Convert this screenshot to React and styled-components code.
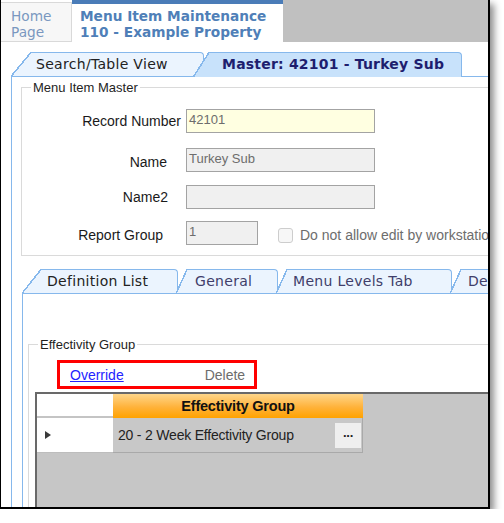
import React from 'react';
import styled, { createGlobalStyle } from 'styled-components';

const GlobalStyle = createGlobalStyle`
  html, body {
    margin: 0;
    padding: 0;
    background: #fff;
  }
  body {
    font-family: "Liberation Sans", Arial, sans-serif;
    overflow: hidden;
  }
`;

const Window = styled.div`
  box-sizing: border-box;
  width: 490px;
  height: 509px;
  display: flex;
  flex-direction: column;
  background: #fff;
  border-left: 1px solid #000;
  border-right: 2px solid #000;
  border-bottom: 2px solid #000;
  box-shadow: 4px 4px 7px rgba(0, 0, 0, 0.45);
  overflow: hidden;
`;

const Header = styled.div`
  display: flex;
  height: 42px;
  flex-shrink: 0;
  font-family: "DejaVu Sans", Verdana, sans-serif;
  font-size: 13.7px;
  line-height: 16px;
`;

const HomeTab = styled.div`
  box-sizing: border-box;
  width: 71px;
  margin-top: 2px;
  padding: 5px 0 0 10px;
  background: #f7f7f7;
  border: 1px solid #d9d9d9;
  border-left: none;
  color: #7a97c0;
`;

const PageTab = styled.div`
  box-sizing: border-box;
  width: 211px;
  padding: 4px 0 0 8px;
  border-top: 4px solid #4a7cb8;
  background: #fff;
  color: #4f7fb8;
  font-weight: bold;
  white-space: nowrap;
`;

const HeaderFill = styled.div`
  flex: 1;
  background: #c0c0c0;
`;

const TabRow = styled.div`
  display: flex;
  height: 24px;
  flex-shrink: 0;
  margin: ${(p) => p.$mt}px 0 0 ${(p) => p.$ml}px;
  position: relative;
  z-index: 2;
`;

const Tab = styled.div`
  position: relative;
  box-sizing: border-box;
  flex-shrink: 0;
  width: ${(p) => p.$w}px;
  height: ${(p) => (p.$active ? 25 : 24)}px;
  margin-left: ${(p) => p.$ml || 0}px;
  padding-left: ${(p) => p.$pl}px;
  font-family: "DejaVu Sans", Verdana, sans-serif;
  font-size: 14px;
  line-height: 25px;
  white-space: nowrap;
  color: ${(p) => (p.$active ? '#1e1e6e' : p.$dim ? '#403e6a' : '#222')};
  font-weight: ${(p) => (p.$active ? 'bold' : 'normal')};
  letter-spacing: ${(p) => (p.$active ? '0.2px' : '0.3px')};

  &::before {
    content: '';
    position: absolute;
    top: 0;
    bottom: 0;
    left: ${(p) => p.$slant}px;
    right: 0;
    background: ${(p) => (p.$active ? '#c8e2fb' : '#ebf4fe')};
    border: 1px solid #86b8ec;
    border-left: none;
    border-bottom: none;
    border-top-right-radius: 4px;
  }

  &::after {
    content: '';
    position: absolute;
    top: 0;
    bottom: 0;
    left: 0;
    width: ${(p) => p.$slant + 1}px;
    background: linear-gradient(
      to top left,
      ${(p) => (p.$active ? '#c8e2fb' : '#ebf4fe')} calc(50% - 1px),
      #86b8ec calc(50% - 1px),
      #86b8ec calc(50% + 0.5px),
      transparent calc(50% + 0.5px)
    );
  }

  span {
    position: relative;
    z-index: 1;
  }
`;

const Panel = styled.div`
  display: flex;
  flex-direction: column;
  flex: 1;
  min-height: 0;
  margin-left: ${(p) => p.$ml}px;
  padding: ${(p) => p.$pt}px 0 0 ${(p) => p.$pl}px;
  border-top: 1px solid #86b8ec;
  border-left: 1px solid #86b8ec;
  background: #fff;
`;

const GroupBox = styled.fieldset`
  box-sizing: border-box;
  display: flex;
  flex-direction: column;
  flex: ${(p) => (p.$grow ? 1 : 'none')};
  width: 560px;
  min-width: 0;
  margin: ${(p) => p.$mt || 0}px 0 0 ${(p) => p.$ml || 0}px;
  padding: 0 0 ${(p) => p.$pb || 0}px 0;
  border: 1px solid #dadada;
  ${(p) => (p.$grow ? 'border-bottom: none;' : '')}
`;

const Legend = styled.legend`
  margin-left: 9px;
  padding: 0 2px;
  font-size: 13px;
  line-height: 15px;
  color: #1e1e1e;
`;

const FormRow = styled.div`
  display: flex;
  align-items: center;
  height: 24px;
  margin-top: ${(p) => p.$mt}px;
`;

const Label = styled.div`
  box-sizing: border-box;
  width: 164px;
  padding-right: ${(p) => p.$pr}px;
  padding-top: ${(p) => p.$dy || 0}px;
  text-align: right;
  font-size: 14px;
  color: #1a1a1a;
  white-space: nowrap;
`;

const Field = styled.div`
  box-sizing: border-box;
  width: ${(p) => p.$w}px;
  height: 24px;
  padding: 2px 0 0 2px;
  background: ${(p) => (p.$highlight ? '#ffffe1' : '#f0f0f0')};
  border: 1px solid #a3a3a3;
  font-size: 13px;
  color: #6d6d6d;
`;

const Check = styled.div`
  display: flex;
  align-items: center;
  gap: 7px;
  margin-left: 20px;
  padding-top: 4px;
  font-size: 14px;
  color: #6d6d6d;
  white-space: nowrap;
`;

const Box = styled.span`
  box-sizing: border-box;
  width: 15px;
  height: 15px;
  border: 1px solid #cdcdcd;
  border-radius: 3px;
  background: #f7f7f7;
`;

const ActionBox = styled.div`
  box-sizing: border-box;
  display: flex;
  align-items: center;
  width: 200px;
  height: 29px;
  margin: 8px 0 0 28px;
  padding-left: 10px;
  border: 3px solid #ff0000;
  font-size: 14px;
`;

const LinkText = styled.a`
  color: ${(p) => (p.$disabled ? '#6d6d6d' : '#2323ff')};
  text-decoration: ${(p) => (p.$disabled ? 'none' : 'underline')};
  margin-left: ${(p) => p.$ml || 0}px;
  cursor: pointer;
`;

const Grid = styled.div`
  flex: 1;
  margin: 3px 0 0 6px;
  display: grid;
  grid-template-columns: 76px 250px;
  grid-template-rows: 24px 35px;
  align-content: start;
  background: #c6c6c6;
  border-top: 2px solid #696969;
  border-left: 2px solid #696969;
`;

const Corner = styled.div`
  background: #fff;
  border-bottom: 2px solid #c4c4c4;
`;

const ColHeader = styled.div`
  display: flex;
  align-items: center;
  justify-content: center;
  background: linear-gradient(#ffd68a, #ffb23a 55%, #ffa200);
  font-size: 14.5px;
  font-weight: bold;
  letter-spacing: -0.2px;
  color: #111;
`;

const RowHeader = styled.div`
  display: flex;
  align-items: center;
  padding-left: 8px;
  background: #fff;
  border-bottom: 1px solid #bdbdbd;
`;

const Arrow = styled.span`
  width: 0;
  height: 0;
  border-left: 6px solid #3a3a3a;
  border-top: 4px solid transparent;
  border-bottom: 4px solid transparent;
`;

const Cell = styled.div`
  display: flex;
  align-items: center;
  justify-content: space-between;
  padding: 0 1px 0 5px;
  background: #c8c8c8;
  border-right: 1px solid #a9a9a9;
  border-bottom: 1px solid #a9a9a9;
  font-size: 14px;
  letter-spacing: -0.2px;
  color: #222;
`;

const Ellipsis = styled.div`
  width: 26px;
  height: 25px;
  display: flex;
  align-items: center;
  justify-content: center;
  background: #efefef;
  font-size: 13px;
  font-weight: bold;
  letter-spacing: -1px;
  color: #222;
`;

const App = () => {
  return (
    <>
      <GlobalStyle />
      <Window>
        <Header>
          <HomeTab>
            Home
            <br />
            Page
          </HomeTab>
          <PageTab>
            Menu Item Maintenance
            <br />
            110 - Example Property
          </PageTab>
          <HeaderFill />
        </Header>

        <TabRow $mt={10} $ml={10}>
          <Tab $w={193} $slant={19} $pl={25}>
            <span>Search/Table View</span>
          </Tab>
          <Tab $w={269} $ml={-11} $slant={15} $pl={29} $active>
            <span>Master: 42101 - Turkey Sub</span>
          </Tab>
        </TabRow>

        <Panel $ml={10} $pt={3} $pl={9}>
          <GroupBox $pb={10}>
            <Legend>Menu Item Master</Legend>
            <FormRow $mt={14}>
              <Label $pr={5}>Record Number</Label>
              <Field $w={189} $highlight>42101</Field>
            </FormRow>
            <FormRow $mt={15}>
              <Label $pr={19} $dy={4}>Name</Label>
              <Field $w={189}>Turkey Sub</Field>
            </FormRow>
            <FormRow $mt={13}>
              <Label $pr={18}>Name2</Label>
              <Field $w={189} />
            </FormRow>
            <FormRow $mt={12}>
              <Label $pr={23} $dy={3}>Report Group</Label>
              <Field $w={72}>1</Field>
              <Check>
                <Box />
                Do not allow edit by workstations
              </Check>
            </FormRow>
          </GroupBox>

          <TabRow $mt={13} $ml={1}>
            <Tab $w={156} $slant={18} $pl={25}>
              <span>Definition List</span>
            </Tab>
            <Tab $w={102} $ml={-2} $slant={10} $pl={19} $dim>
              <span>General</span>
            </Tab>
            <Tab $w={176} $ml={-2} $slant={10} $pl={17} $dim>
              <span>Menu Levels Tab</span>
            </Tab>
            <Tab $w={120} $ml={-2} $slant={10} $pl={18} $dim>
              <span>Definitions</span>
            </Tab>
          </TabRow>

          <Panel $ml={1} $pt={43} $pl={5}>
            <GroupBox $grow>
              <Legend>Effectivity Group</Legend>
              <ActionBox>
                <LinkText>Override</LinkText>
                <LinkText $disabled $ml={81}>Delete</LinkText>
              </ActionBox>
              <Grid>
                <Corner />
                <ColHeader>Effectivity Group</ColHeader>
                <RowHeader>
                  <Arrow />
                </RowHeader>
                <Cell>
                  20 - 2 Week Effectivity Group
                  <Ellipsis>···</Ellipsis>
                </Cell>
              </Grid>
            </GroupBox>
          </Panel>
        </Panel>
      </Window>
    </>
  );
};

export default App;
